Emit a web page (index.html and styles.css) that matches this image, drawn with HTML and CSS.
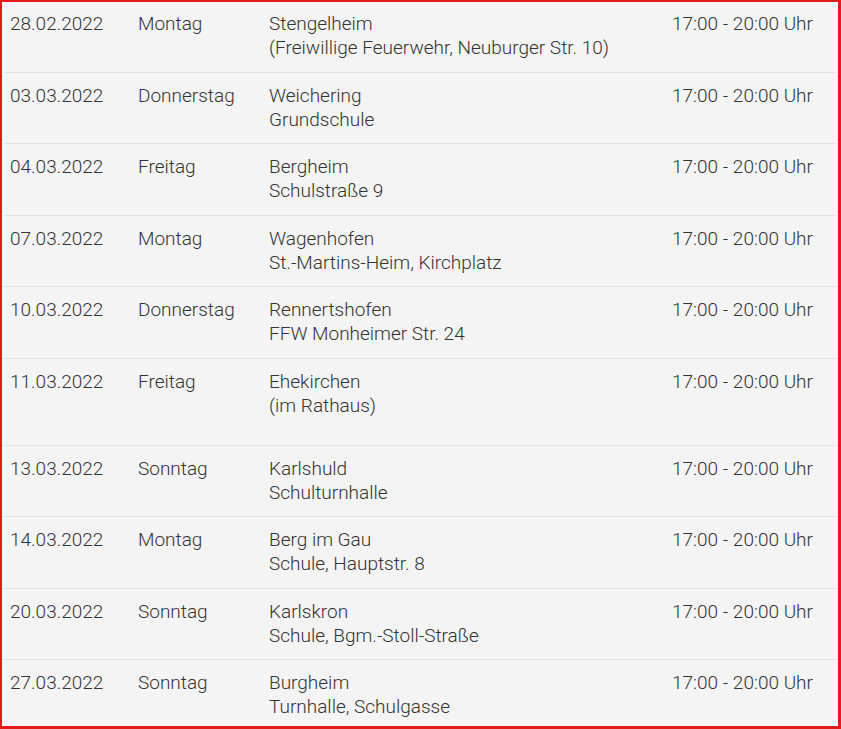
FILE: index.html
```html
<!DOCTYPE html>
<html lang="de">
<head>
<meta charset="utf-8">
<title>Termine</title>
<link rel="stylesheet" href="styles.css">
</head>
<body>
<div class="frame">
  <div class="row row-first">
    <div class="date">28.02.2022</div><div class="day">Montag</div>
    <div class="place">Stengelheim<br>(Freiwillige Feuerwehr, Neuburger Str. 10)</div>
    <div class="time">17:00 - 20:00 Uhr</div>
  </div>
  <div class="row">
    <div class="date">03.03.2022</div><div class="day">Donnerstag</div>
    <div class="place">Weichering<br>Grundschule</div>
    <div class="time">17:00 - 20:00 Uhr</div>
  </div>
  <div class="row">
    <div class="date">04.03.2022</div><div class="day">Freitag</div>
    <div class="place">Bergheim<br>Schulstraße 9</div>
    <div class="time">17:00 - 20:00 Uhr</div>
  </div>
  <div class="row">
    <div class="date">07.03.2022</div><div class="day">Montag</div>
    <div class="place">Wagenhofen<br>St.-Martins-Heim, Kirchplatz</div>
    <div class="time">17:00 - 20:00 Uhr</div>
  </div>
  <div class="row">
    <div class="date">10.03.2022</div><div class="day">Donnerstag</div>
    <div class="place">Rennertshofen<br>FFW Monheimer Str. 24</div>
    <div class="time">17:00 - 20:00 Uhr</div>
  </div>
  <div class="row row-tall">
    <div class="date">11.03.2022</div><div class="day">Freitag</div>
    <div class="place">Ehekirchen<br>(im Rathaus)</div>
    <div class="time">17:00 - 20:00 Uhr</div>
  </div>
  <div class="row">
    <div class="date">13.03.2022</div><div class="day">Sonntag</div>
    <div class="place">Karlshuld<br>Schulturnhalle</div>
    <div class="time">17:00 - 20:00 Uhr</div>
  </div>
  <div class="row">
    <div class="date">14.03.2022</div><div class="day">Montag</div>
    <div class="place">Berg im Gau<br>Schule, Hauptstr. 8</div>
    <div class="time">17:00 - 20:00 Uhr</div>
  </div>
  <div class="row">
    <div class="date">20.03.2022</div><div class="day">Sonntag</div>
    <div class="place">Karlskron<br>Schule, Bgm.-Stoll-Straße</div>
    <div class="time">17:00 - 20:00 Uhr</div>
  </div>
  <div class="row row-last">
    <div class="date">27.03.2022</div><div class="day">Sonntag</div>
    <div class="place">Burgheim<br>Turnhalle, Schulgasse</div>
    <div class="time">17:00 - 20:00 Uhr</div>
  </div>
</div>
</body>
</html>
```

FILE: styles.css
```css
html, body {
  margin: 0;
  padding: 0;
  background: #f4f4f4;
}
.frame {
  box-sizing: border-box;
  width: 841px;
  height: 729px;
  overflow: hidden;
  border-style: solid;
  border-color: #e31b1b;
  border-width: 2px 3px 3px 2px;
  background: #f4f4f4;
  font-family: Roboto, "Liberation Sans", sans-serif;
  font-size: 19px;
  font-weight: 300;
  line-height: 24px;
  color: #333333;
}
.row {
  display: grid;
  grid-template-columns: 128px 131px 403px 1fr;
  padding: 11px 0 11.5px 8px;
  border-bottom: 1px solid #e3e3e3;
}
.row-first {
  padding-top: 10px;
}
.row-tall {
  padding-bottom: 27px;
}
.row-last {
  border-bottom: none;
}
```
